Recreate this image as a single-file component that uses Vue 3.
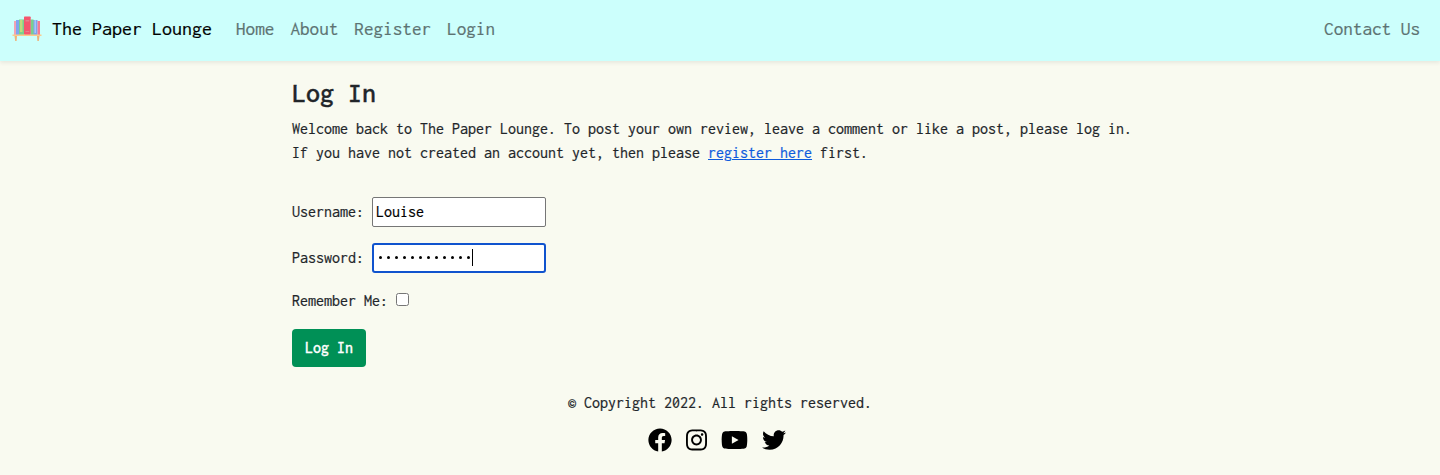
<script setup>
import { ref } from 'vue'

const links = ['Home', 'About', 'Register', 'Login']
const username = ref('Louise')
const dots = 12
const remember = ref(false)

const socials = [
  { name: 'facebook', w: 512, width: 24, d: 'M504 256C504 119 393 8 256 8S8 119 8 256c0 123.78 90.69 226.38 209.25 245V327.69h-63V256h63v-54.64c0-62.15 37-96.48 93.67-96.48 27.14 0 55.52 4.84 55.52 4.84v61h-31.28c-30.8 0-40.41 19.12-40.41 38.73V256h68.78l-11 71.69h-57.78V501C413.31 482.38 504 379.78 504 256z' },
  { name: 'instagram', w: 448, width: 21, d: 'M224.1 141c-63.6 0-114.9 51.3-114.9 114.9s51.3 114.9 114.9 114.9S339 319.5 339 255.9 287.7 141 224.1 141zm0 189.6c-41.1 0-74.7-33.5-74.7-74.7s33.5-74.7 74.7-74.7 74.7 33.5 74.7 74.7-33.6 74.7-74.7 74.7zm146.4-194.3c0 14.9-12 26.8-26.8 26.8-14.9 0-26.8-12-26.8-26.8s12-26.8 26.8-26.8 26.8 12 26.8 26.8zm76.1 27.2c-1.7-35.9-9.9-67.7-36.2-93.9-26.2-26.2-58-34.4-93.9-36.2-37-2.1-147.9-2.1-184.9 0-35.8 1.7-67.6 9.9-93.9 36.1s-34.4 58-36.2 93.9c-2.1 37-2.1 147.9 0 184.9 1.7 35.9 9.9 67.7 36.2 93.9s58 34.4 93.9 36.2c37 2.1 147.9 2.1 184.9 0 35.9-1.7 67.7-9.9 93.9-36.2 26.2-26.2 34.4-58 36.2-93.9 2.1-37 2.1-147.8 0-184.8zM398.8 388c-7.8 19.6-22.9 34.7-42.6 42.6-29.5 11.7-99.5 9-132.1 9s-102.7 2.6-132.1-9c-19.6-7.8-34.7-22.9-42.6-42.6-11.7-29.5-9-99.5-9-132.1s-2.6-102.7 9-132.1c7.8-19.6 22.9-34.7 42.6-42.6 29.5-11.7 99.5-9 132.1-9s102.7-2.6 132.1 9c19.6 7.8 34.7 22.9 42.6 42.6 11.7 29.5 9 99.5 9 132.1s2.7 102.7-9 132.1z' },
  { name: 'youtube', w: 576, width: 27, d: 'M549.655 124.083c-6.281-23.65-24.787-42.276-48.284-48.597C458.781 64 288 64 288 64S117.22 64 74.629 75.486c-23.497 6.322-42.003 24.947-48.284 48.597-11.412 42.867-11.412 132.305-11.412 132.305s0 89.438 11.412 132.305c6.281 23.65 24.787 41.5 48.284 47.821C117.22 448 288 448 288 448s170.78 0 213.371-11.486c23.497-6.321 42.003-24.171 48.284-47.821 11.412-42.867 11.412-132.305 11.412-132.305s0-89.438-11.412-132.305zm-317.51 213.508V175.185l142.739 81.205-142.739 81.201z' },
  { name: 'twitter', w: 512, width: 24, d: 'M459.37 151.716c.325 4.548.325 9.097.325 13.645 0 138.72-105.583 298.558-298.558 298.558-59.452 0-114.68-17.219-161.137-47.106 8.447.974 16.568 1.299 25.34 1.299 49.055 0 94.213-16.568 130.274-44.832-46.132-.975-84.792-31.188-98.112-72.772 6.498.974 12.995 1.624 19.818 1.624 9.421 0 18.843-1.3 27.614-3.573-48.081-9.747-84.143-51.98-84.143-102.985v-1.299c13.969 7.797 30.214 12.67 47.431 13.319-28.264-18.843-46.781-51.005-46.781-87.391 0-19.492 5.197-37.36 14.294-52.954 51.655 63.675 129.3 105.258 216.365 109.807-1.624-7.797-2.599-15.918-2.599-24.04 0-57.828 46.782-104.934 104.934-104.934 30.213 0 57.502 12.67 76.67 33.137 23.715-4.548 46.456-13.32 66.599-25.34-7.798 24.366-24.366 44.833-46.132 57.827 21.117-2.273 41.584-8.122 60.426-16.243-14.292 20.791-32.161 39.308-52.628 54.253z' }
]
</script>

<template>
  <div class="page">
    <nav class="navbar">
      <a class="brand">
        <svg class="logo" width="30" height="30" viewBox="0 0 30 30">
          <path fill="#f2a3b4" d="M2 7h2v14H2z" />
          <path fill="#7fa6ee" d="M4 6h3v15H4zM21 6h4.500v15H21z" />
          <path fill="#7ad08e" d="M7 5.500h5V21H7zM18.500 5.500H21.500V21h-3z" />
          <path fill="#bfdc7e" d="M8 6h2.500v12H8z" />
          <path fill="#a9c6fa" d="M22.500 6h1.500v13h-1.500z" />
          <path fill="#f47a93" d="M25.500 7H28v14h-2.500z" />
          <rect fill="#f4566e" x="12" y="2.500" width="6.700" height="18.500" rx=".7" />
          <path fill="#e5808a" d="M13.500 6h3.700v1.500h-3.700zM13.500 17h3.700v1h-3.700z" />
          <path fill="#fbcb8c" d="M.5 20.500h29V22H.5z" />
          <path fill="#efb277" d="M2.500 22H5l-.4 5H3.200zM25 22h2.500l-.7 5h-1.400z" />
        </svg>
        <span>The Paper Lounge</span>
      </a>
      <a v-for="link in links" :key="link" class="nav-link">{{ link }}</a>
      <a class="nav-link contact">Contact Us</a>
    </nav>

    <main class="content">
      <h1>Log In</h1>
      <p>Welcome back to The Paper Lounge. To post your own review, leave a comment or like a post, please log in.<br />If you have not created an account yet, then please <a class="register">register here</a> first.</p>
      <form @submit.prevent>
        <div class="row">
          <label>Username:</label>
          <input v-model="username" class="field" type="text" spellcheck="false" />
        </div>
        <div class="row password">
          <label>Password:</label>
          <div class="field focused"><i v-for="n in dots" :key="n" class="dot"></i><i class="caret"></i></div>
        </div>
        <div class="row remember">
          <label>Remember Me:</label>
          <input v-model="remember" class="check" type="checkbox" />
        </div>
        <button class="submit" type="submit">Log In</button>
      </form>
    </main>

    <footer class="footer">
      <p>© Copyright 2022. All rights reserved.</p>
      <div class="socials">
        <svg v-for="s in socials" :key="s.name" :width="s.width" height="24" :viewBox="`0 0 ${s.w} 512`"><path :d="s.d" /></svg>
      </div>
    </footer>
  </div>
</template>

<style>
body { margin: 0; background: #f9faf0; }
</style>

<style scoped>
.page {
  box-sizing: border-box;
  height: 475px;
  overflow: hidden;
  color: #212529;
  font: 16px/24px Inconsolata, "Noto Sans Mono CJK SC", "Liberation Mono", monospace;
  white-space: nowrap;
  -webkit-text-stroke: .2px;
}
.navbar {
  display: flex;
  align-items: center;
  box-sizing: border-box;
  height: 61px;
  padding: 0 20px 3px 12px;
  background: #ccfffc;
  box-shadow: 0 2px 4px rgba(0, 0, 0, .075);
}
.brand { display: flex; align-items: center; gap: 10px; margin-right: 24px; font-size: 20px; color: #000; }
.nav-link { margin-right: 16px; font-size: 19.2px; color: #5c7372; }
.contact { margin: 0 0 0 auto; }
.content { margin-left: 292px; padding-top: 15px; }
h1 { margin: 0 0 8px; font-size: 28px; line-height: 33px; font-weight: 500; -webkit-text-stroke: .4px; }
p { margin: 0; }
.register { color: #0d5bdd; text-decoration: underline; }
form { margin-top: 32px; }
.row { display: flex; align-items: center; gap: 8px; height: 30px; }
.field {
  box-sizing: border-box;
  width: 174px;
  height: 30px;
  padding: 0 3px 2px;
  border: 1px solid #767676;
  border-radius: 2px;
  background: #fff;
  color: #000;
  font: inherit;
  outline: none;
}
.password { margin-top: 16px; }
.focused { display: flex; align-items: center; padding: 0 2px 2px; border: 2px solid #1053ce; border-radius: 3px; }
.dot { display: flex; justify-content: center; width: 8px; }
.dot::before { content: ""; width: 3px; height: 3px; border-radius: 50%; background: #000; }
.caret { width: 1px; height: 17px; background: #000; }
.remember { height: 24px; margin-top: 16px; }
.check { width: 13px; height: 13px; margin: 0 0 4px; }
.submit {
  display: block;
  width: 74px;
  height: 38px;
  margin-top: 16px;
  padding: 0;
  border: 0;
  border-radius: 4px;
  background: #009056;
  color: #fff;
  font: inherit;
  font-weight: 500;
  -webkit-text-stroke: .3px;
}
.footer { margin-top: 24px; text-align: center; }
.socials { display: flex; justify-content: center; gap: 14px; margin: 13px 6px 0 0; }
.socials svg { display: block; }
</style>
